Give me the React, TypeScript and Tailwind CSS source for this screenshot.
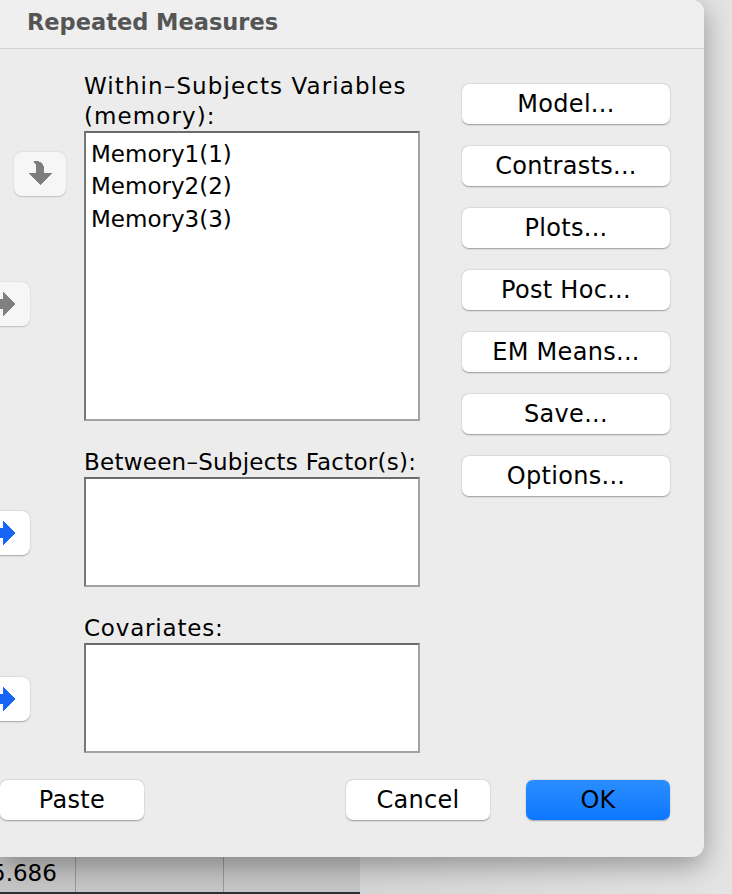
import React from 'react';

const font = { fontFamily: '"DejaVu Sans", "Noto Sans", sans-serif' };

const RightArrow = ({ color }: { color: string }) => (
  <svg width="24" height="24" viewBox="0 0 24 24" shapeRendering="crispEdges">
    <rect x="0" y="7" width="12" height="10" fill={color} />
    <polygon points="11,0 23,12 11,24" fill={color} />
  </svg>
);

const DownArrow = () => (
  <svg width="24" height="26" viewBox="0 0 24 26" shapeRendering="crispEdges">
    <path d="M6 0 L10 0 Q16 2 16 8 L16 13 L8 13 L8 6 Q8 3 6 2 Z" fill="#7d7d7d" />
    <polygon points="0,12 24,12 12,24" fill="#7d7d7d" />
  </svg>
);

const SideButton = ({ label }: { label: string }) => (
  <button className="w-[208px] h-[40px] bg-white rounded-[7px] shadow-[0_0.5px_1.5px_rgba(0,0,0,0.35)] text-[24px] tracking-[0.3px] text-black leading-none">
    {label}
  </button>
);

const ListBox = ({ h, children }: { h: string; children?: React.ReactNode }) => (
  <div
    className={`w-[336px] ${h} bg-white border-2 border-t-[#6b6b6b] border-l-[#777777] border-r-[#a3a3a3] border-b-[#a3a3a3] pl-[5px] pt-[5px]`}
  >
    {children}
  </div>
);

export default function App() {
  return (
    <div
      className="w-[732px] h-[894px] overflow-hidden flex flex-col bg-gradient-to-r from-[#c9c9c9] to-[#e4e4e4]"
      style={font}
    >
      <div className="flex h-[857px]">
        <div className="relative z-10 w-[704px] h-[857px] bg-[#ececec] rounded-r-[12px] shadow-[0_8px_28px_rgba(0,0,0,0.35)] flex flex-col">
          {/* title */}
          <div className="h-[49px] border-b border-[#cfcfcf] bg-[#efefef] rounded-tr-[12px] flex items-center pl-[27px]">
            <span className="text-[22.5px] font-bold text-[#555555] -mt-[3px]">Repeated Measures</span>
          </div>

          <div className="flex h-[731px]">
            {/* arrows */}
            <div className="w-[84px] flex flex-col">
              <div className="ml-[14px] mt-[103px] w-[52px] h-[44px] rounded-[8px] bg-[#f6f6f6] shadow-[0_0.5px_1.5px_rgba(0,0,0,0.2)] flex items-center justify-center">
                <DownArrow />
              </div>
              <div className="-ml-[22px] mt-[86px] w-[52px] h-[44px] rounded-[8px] bg-[#f6f6f6] shadow-[0_0.5px_1.5px_rgba(0,0,0,0.2)] flex items-center justify-center">
                <RightArrow color="#808080" />
              </div>
              <div className="-ml-[22px] mt-[185px] w-[52px] h-[44px] rounded-[8px] bg-white shadow-[0_0.5px_1.5px_rgba(0,0,0,0.3)] flex items-center justify-center">
                <RightArrow color="#1764f6" />
              </div>
              <div className="-ml-[22px] mt-[122px] w-[52px] h-[44px] rounded-[8px] bg-white shadow-[0_0.5px_1.5px_rgba(0,0,0,0.3)] flex items-center justify-center">
                <RightArrow color="#1764f6" />
              </div>
            </div>

            {/* lists */}
            <div className="w-[336px] flex flex-col text-[23px] text-black">
              <div className="mt-[22px] leading-[30px] tracking-[1.1px] whitespace-nowrap">
                Within–Subjects Variables
                <br />
                (memory):
              </div>
              <ListBox h="h-[290px]">
                <div className="leading-[32px]">Memory1(1)</div>
                <div className="leading-[33px]">Memory2(2)</div>
                <div className="leading-[33px]">Memory3(3)</div>
              </ListBox>
              <div className="mt-[26px] leading-[30px] tracking-[0.25px] whitespace-nowrap">Between–Subjects Factor(s):</div>
              <ListBox h="h-[110px]" />
              <div className="mt-[26px] leading-[30px] tracking-[0.8px]">Covariates:</div>
              <ListBox h="h-[110px]" />
            </div>

            {/* side buttons */}
            <div className="ml-[42px] mt-[35px] flex flex-col gap-[22px]">
              <SideButton label="Model..." />
              <SideButton label="Contrasts..." />
              <SideButton label="Plots..." />
              <SideButton label="Post Hoc..." />
              <SideButton label="EM Means..." />
              <SideButton label="Save..." />
              <SideButton label="Options..." />
            </div>
          </div>

          {/* footer */}
          <div className="flex text-[24px] tracking-[0.3px] text-black">
            <button className="w-[144px] h-[40px] bg-white rounded-[7px] shadow-[0_0.5px_1.5px_rgba(0,0,0,0.35)] leading-none">
              Paste
            </button>
            <button className="ml-[202px] w-[144px] h-[40px] bg-white rounded-[7px] shadow-[0_0.5px_1.5px_rgba(0,0,0,0.35)] leading-none">
              Cancel
            </button>
            <button className="ml-[36px] w-[144px] h-[40px] rounded-[7px] bg-gradient-to-b from-[#2a8dff] to-[#0a78ff] shadow-[0_0.5px_1.5px_rgba(0,0,0,0.3)] leading-none">
              OK
            </button>
          </div>
        </div>
        <div className="flex-1" />
      </div>

      {/* table row underneath */}
      <div className="flex h-[37px]">
        <div className="w-[360px] h-[37px] bg-[#c6c6c6] border-b-2 border-[#2b3138] flex">
          <div className="w-[76px] border-r border-[#9a9a9a] text-[23px] text-black leading-[32px] overflow-hidden">
            <span className="block -ml-[9px] whitespace-nowrap">5.686</span>
          </div>
          <div className="w-[148px] border-r border-[#9a9a9a]" />
          <div className="flex-1" />
        </div>
        <div className="flex-1" />
      </div>
    </div>
  );
}
